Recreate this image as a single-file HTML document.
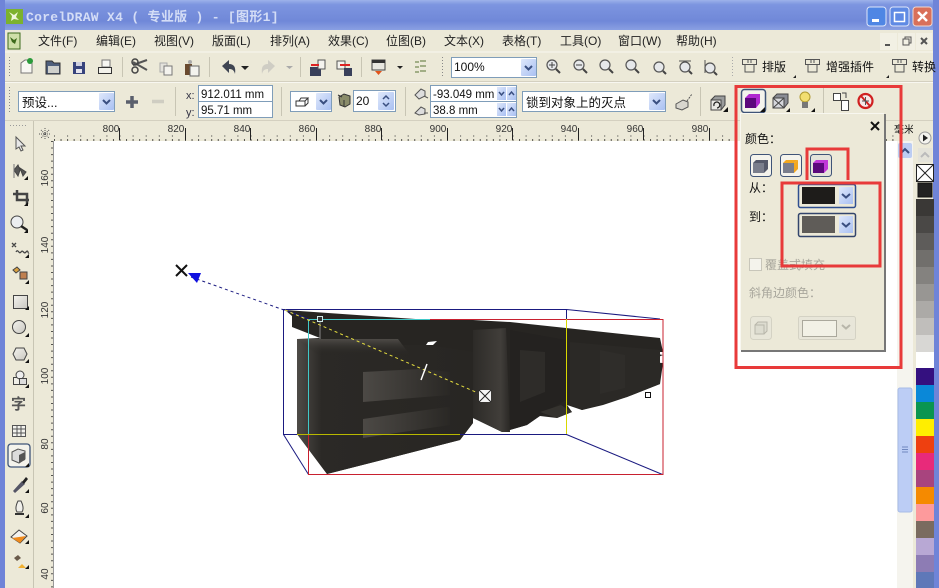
<!DOCTYPE html>
<html><head><meta charset="utf-8"><style>
html,body{margin:0;padding:0;width:939px;height:588px;overflow:hidden;background:#ece9d8}
svg{display:block}
text{font-family:"Liberation Sans","Noto Sans CJK SC",sans-serif;font-size:12px;fill:#111}
.m{font-size:12px;fill:#222}
.r{font-size:10px;fill:#333;text-anchor:middle}
.g{fill:#a8a69c}
</style></head><body>
<svg width="939" height="588" viewBox="0 0 939 588" xmlns="http://www.w3.org/2000/svg">
<defs>
<linearGradient id="tb" x1="0" y1="0" x2="0" y2="1"><stop offset="0" stop-color="#9db2ea"/><stop offset=".15" stop-color="#7d95e0"/><stop offset=".7" stop-color="#7088d8"/><stop offset="1" stop-color="#8aa0e2"/></linearGradient>
<linearGradient id="btn" x1="0" y1="0" x2="1" y2="1"><stop offset="0" stop-color="#dfe8fb"/><stop offset="1" stop-color="#a9c0f2"/></linearGradient>
<linearGradient id="face" x1="0" y1="0" x2="1" y2="0"><stop offset="0" stop-color="#4e4b47"/><stop offset=".14" stop-color="#2b2926"/><stop offset="1" stop-color="#282623"/></linearGradient>
<linearGradient id="facetop" x1="0" y1="0" x2="0" y2="1"><stop offset="0" stop-color="#4e4b47"/><stop offset="1" stop-color="#282623" stop-opacity="0"/></linearGradient>
<linearGradient id="inner" x1="0" y1="0" x2="1" y2="0"><stop offset="0" stop-color="#4c4945"/><stop offset="1" stop-color="#2a2825"/></linearGradient>
<linearGradient id="mid" x1="0" y1="0" x2="1" y2="0"><stop offset="0" stop-color="#2d2b28"/><stop offset=".75" stop-color="#413e3a"/><stop offset="1" stop-color="#2a2825"/></linearGradient>
<linearGradient id="cube" x1="0" y1="0" x2="1" y2="1"><stop offset="0" stop-color="#f4f3ee"/><stop offset="1" stop-color="#c9c7c0"/></linearGradient>
</defs>

<!-- window frame -->
<rect width="939" height="588" fill="#ece9d8"/>
<rect x="0" width="939" height="30" fill="url(#tb)"/>
<rect x="0" y="0" width="5" height="588" fill="#6f84d8"/>
<rect x="933" y="0" width="6" height="588" fill="#6f84d8"/>
<!-- title -->
<rect x="6" y="9" width="17" height="15" fill="#7cb22e"/>
<path d="M9 12l5 3 4-3-2 5 3 3-5-1-3 2 1-5z" fill="#eef6da"/>
<text x="26" y="21" style="font-family:'Liberation Mono','Noto Sans CJK SC',monospace;font-size:13px;font-weight:bold;fill:#d4ddf6;letter-spacing:.3px" xml:space="preserve">CorelDRAW X4 ( 专业版 ) - [图形1]</text>
<!-- window buttons -->
<rect x="867" y="7" width="19" height="19" rx="3" fill="#4f86e4" stroke="#dfe6fa"/><rect x="872" y="19" width="7" height="3" fill="#fff"/>
<rect x="890" y="7" width="19" height="19" rx="3" fill="#5f8ae4" stroke="#dfe6fa"/><rect x="894.500" y="12.500" width="10" height="9" fill="none" stroke="#fff" stroke-width="1.500"/>
<rect x="913" y="7" width="19" height="19" rx="3" fill="#d9705a" stroke="#efd8d2"/><path d="M918 12l9 9m0-9l-9 9" stroke="#fff" stroke-width="2.500"/>

<!-- menu bar -->
<rect x="5" y="30" width="928" height="22" fill="#ece9d8"/>
<rect x="8" y="33" width="12" height="16" fill="#cfe0a8" stroke="#3d6a1c"/><path d="M10 37l4 3 3-2-2 6-3-2z" fill="#3d6a1c"/>
<text class="m" x="38" y="45" xml:space="preserve">文件(F)</text>
<text class="m" x="96" y="45">编辑(E)</text>
<text class="m" x="154" y="45">视图(V)</text>
<text class="m" x="212" y="45">版面(L)</text>
<text class="m" x="270" y="45">排列(A)</text>
<text class="m" x="328" y="45">效果(C)</text>
<text class="m" x="386" y="45">位图(B)</text>
<text class="m" x="444" y="45">文本(X)</text>
<text class="m" x="502" y="45">表格(T)</text>
<text class="m" x="560" y="45">工具(O)</text>
<text class="m" x="618" y="45">窗口(W)</text>
<text class="m" x="676" y="45">帮助(H)</text>
<rect x="880" y="33" width="17" height="17" fill="#f2f0e4"/><rect x="898" y="33" width="17" height="17" fill="#f2f0e4"/><rect x="916" y="33" width="16" height="17" fill="#f2f0e4"/>
<rect x="885" y="44" width="5" height="2" fill="#555"/>
<rect x="903" y="39" width="6" height="6" fill="none" stroke="#555"/><path d="M905 39v-2h6v6h-2" fill="none" stroke="#555"/>
<path d="M921 38l6 6m0-6l-6 6" stroke="#555" stroke-width="2"/>

<!-- toolbars borders -->
<line x1="5" y1="52" x2="933" y2="52" stroke="#f8f7f0"/>
<line x1="5" y1="81.500" x2="933" y2="81.500" stroke="#d4d0c0"/>
<line x1="5" y1="82.500" x2="933" y2="82.500" stroke="#f8f7f0"/>
<line x1="5" y1="120.500" x2="933" y2="120.500" stroke="#d4d0c0"/>
<line x1="9.500" y1="57" x2="9.500" y2="77" stroke="#888" stroke-dasharray="1 2"/>
<line x1="9.500" y1="87" x2="9.500" y2="114" stroke="#888" stroke-dasharray="1 2"/>
<line x1="442.500" y1="57" x2="442.500" y2="77" stroke="#888" stroke-dasharray="1 2"/>
<line x1="732.500" y1="57" x2="732.500" y2="77" stroke="#aaa" stroke-dasharray="1 2"/>

<!-- toolbar 1 icons -->
<path d="M21 73V63l4-3h7v13z" fill="#f8f7f2" stroke="#777"/><circle cx="30" cy="61" r="3" fill="#2a9a3a"/>
<path d="M46 74V61h6l2 2h6v11z" fill="#4f5f7c" stroke="#333"/><rect x="48" y="66" width="11" height="7" fill="#cfd0cc"/>
<rect x="73" y="62" width="12" height="12" fill="#37437c"/><rect x="76" y="62" width="6" height="4" fill="#cfd0e0"/><rect x="76" y="69" width="6" height="4" fill="#e4e4ee"/>
<rect x="102" y="60" width="8" height="7" fill="#f6f6f2" stroke="#777"/><rect x="98.500" y="67.500" width="13" height="6" fill="#f2f1ea" stroke="#333"/>
<line x1="122.500" y1="57" x2="122.500" y2="77" stroke="#c8c5b4"/>
<path d="M133 65l14-5M133 62l14 8" stroke="#555" stroke-width="2" fill="none"/><circle cx="135" cy="62" r="3" fill="none" stroke="#444" stroke-width="1.500"/><circle cx="135" cy="70" r="3" fill="none" stroke="#444" stroke-width="1.500"/>
<rect x="160" y="63" width="7" height="9" fill="#e4e3dc" stroke="#aaa"/><rect x="164" y="66" width="8" height="9" fill="#f4f3ee" stroke="#777"/>
<rect x="185" y="64" width="7" height="11" fill="#6a4a2e"/><rect x="190" y="66" width="9" height="10" fill="#f3f3ee" stroke="#666"/><circle cx="190" cy="62" r="2" fill="#aaa"/>
<line x1="209.500" y1="57" x2="209.500" y2="77" stroke="#c8c5b4"/>
<path d="M222 66l7-6v4c5 0 7 3 6 10-1-4-3-5-6-5v4z" fill="#3f4552"/>
<path d="M245 66l4 0-4 4-4-4z" fill="#222"/>
<path d="M275 66l-7-6v4c-5 0-7 3-6 10 1-4 3-5 6-5v4z" fill="#cfcdc4"/>
<path d="M286 66h7l-3.500 3z" fill="#aaa"/>
<line x1="300.500" y1="57" x2="300.500" y2="77" stroke="#c8c5b4"/>
<rect x="310" y="67" width="11" height="9" fill="#39405a"/><rect x="318" y="60" width="7" height="9" fill="#f4f3ee" stroke="#555"/><path d="M311 65h8" stroke="#d22" stroke-width="2"/>
<rect x="337" y="61" width="8" height="8" fill="#f4f3ee" stroke="#555"/><rect x="344" y="68" width="8" height="8" fill="#39405a"/><path d="M340 65h10" stroke="#d22" stroke-width="2"/>
<line x1="361.500" y1="57" x2="361.500" y2="77" stroke="#c8c5b4"/>
<rect x="372" y="60" width="13" height="10" fill="#e8e7e0" stroke="#444"/><rect x="372" y="60" width="13" height="3" fill="#333"/><path d="M375 71h7l-3.500 4z" fill="#e2541b"/>
<path d="M397 66h6l-3 3z" fill="#222"/>
<path d="M415 62h4M415 67h4M415 72h4M420 61h6M420 66h6M420 71h6" stroke="#8a9a6a" stroke-width="1.500"/>
<!-- zoom combo -->
<rect x="451.500" y="57.500" width="85" height="20" fill="#fff" stroke="#7f9db9"/>
<text x="454" y="71" style="font-size:12px">100%</text>
<rect x="521" y="59" width="15" height="17" rx="1" fill="url(#btn)"/><path d="M525 66l3.500 3.500 3.500-3.500" fill="none" stroke="#3a4f80" stroke-width="2"/>
<!-- zoom icons -->
<g fill="#e6e8ea" stroke="#555" stroke-width="1.200">
<circle cx="552" cy="65" r="5"/><circle cx="579" cy="65" r="5"/><circle cx="605" cy="65" r="5"/><circle cx="631" cy="65" r="5"/><circle cx="659" cy="67" r="5"/><circle cx="685" cy="67" r="5"/><circle cx="710" cy="68" r="5"/>
</g>
<g stroke="#444" stroke-width="2"><path d="M556 69l4 4M583 69l4 4M609 69l4 4M635 69l4 4M663 71l3 3M689 71l3 3M714 72l3 3"/></g>
<path d="M549 65h6M552 62v6M576 65h6" stroke="#444"/>
<path d="M679 61h12M705 60v13" stroke="#555"/>
<!-- plug-in buttons -->
<g fill="none" stroke="#555"><rect x="742.500" y="59.500" width="14" height="5"/><path d="M745 65v7h9v-7M748 60v3M751 60v3"/><rect x="805.500" y="59.500" width="14" height="5"/><path d="M808 65v7h9v-7M811 60v3M814 60v3"/><rect x="892.500" y="59.500" width="14" height="5"/><path d="M895 65v7h9v-7M898 60v3M901 60v3"/></g>
<text x="762" y="71" style="font-size:12px">排版</text>
<text x="826" y="71" style="font-size:12px">增强插件</text>
<text x="912" y="71" style="font-size:12px">转换</text>
<path d="M796 78h-3l3-3zM889 78h-3l3-3z" fill="#222"/>

<!-- toolbar 2 -->
<rect x="18.500" y="91.500" width="96" height="20" fill="#fff" stroke="#7f9db9"/>
<text x="22" y="107" style="font-size:12.500px">预设...</text>
<rect x="99" y="93" width="15" height="17" rx="1" fill="url(#btn)"/><path d="M103 100l3.500 3.500 3.500-3.500" fill="none" stroke="#3a4f80" stroke-width="2"/>
<path d="M126 102h12M132 96v12" stroke="#5a5f6c" stroke-width="3.500"/>
<path d="M152 101.500h12" stroke="#cfcdc2" stroke-width="3.500"/>
<line x1="175.500" y1="87" x2="175.500" y2="116" stroke="#c8c5b4"/>
<text x="186" y="99" style="font-size:11px;fill:#334">x:</text>
<text x="186" y="116" style="font-size:11px;fill:#334">y:</text>
<rect x="198.500" y="85.500" width="74" height="32" fill="#fff" stroke="#7f9db9"/><line x1="198" y1="101.500" x2="272" y2="101.500" stroke="#7f9db9"/>
<text x="201" y="98" style="font-size:11.500px">912.011 mm</text>
<text x="201" y="114" style="font-size:11.500px">95.71 mm</text>
<line x1="281.500" y1="87" x2="281.500" y2="116" stroke="#c8c5b4"/>
<rect x="290.500" y="91.500" width="41" height="20" fill="#fff" stroke="#7f9db9"/>
<path d="M296 106v-5h9v5zM305 101l3-3h-7l-2 3M305 106l3-3v-5" fill="none" stroke="#333"/>
<rect x="316" y="93" width="15" height="17" rx="1" fill="url(#btn)"/><path d="M320 100l3.500 3.500 3.500-3.500" fill="none" stroke="#3a4f80" stroke-width="2"/>
<path d="M339 97l5-3 6 2v8l-5 3-5-2z" fill="#8a8c6a" stroke="#333"/><path d="M338 95l4 2M344 100v7" stroke="#333"/>
<rect x="353.500" y="90.500" width="42" height="21" fill="#fff" stroke="#7f9db9"/>
<text x="356" y="105" style="font-size:12px">20</text>
<rect x="378" y="92" width="16" height="18" rx="1" fill="url(#btn)"/><path d="M383 99l3-3 3 3M383 103l3 3 3-3" fill="none" stroke="#3a4f80" stroke-width="1.500"/>
<line x1="405.500" y1="87" x2="405.500" y2="116" stroke="#c8c5b4"/>
<path d="M415 95l6-6 4 2v5l-6 3z" fill="#ddd" stroke="#555"/><path d="M415 113l6-6 4 2v5l-6 1z" fill="#ddd" stroke="#555"/><path d="M424 96l4 2M424 113l4 0" stroke="#555"/>
<rect x="430.500" y="85.500" width="86" height="32" fill="#fff" stroke="#7f9db9"/><line x1="430" y1="101.500" x2="516" y2="101.500" stroke="#7f9db9"/>
<text x="433" y="98" style="font-size:11.500px">-93.049 mm</text>
<text x="433" y="114" style="font-size:11.500px">38.8 mm</text>
<g fill="url(#btn)"><rect x="497" y="87" width="9" height="13"/><rect x="507" y="87" width="9" height="13"/><rect x="497" y="103" width="9" height="13"/><rect x="507" y="103" width="9" height="13"/></g>
<path d="M499 92l2.500 3 2.500-3M499 108l2.500 3 2.500-3" fill="none" stroke="#3a4f80" stroke-width="1.500"/>
<path d="M509 95l2.500-3 2.500 3M509 111l2.500-3 2.500 3" fill="none" stroke="#3a4f80" stroke-width="1.500"/>
<rect x="522.500" y="91.500" width="143" height="20" fill="#fff" stroke="#7f9db9"/>
<text x="526" y="107" style="font-size:12.500px">锁到对象上的灭点</text>
<rect x="649" y="93" width="16" height="17" rx="1" fill="url(#btn)"/><path d="M653 100l3.500 3.500 3.500-3.500" fill="none" stroke="#3a4f80" stroke-width="2"/>
<path d="M676 104l7-4 5 2v5l-6 3-6-2z" fill="#d8d6ce" stroke="#555"/><path d="M687 101l5-7" stroke="#555" stroke-dasharray="2 1"/>
<line x1="700.500" y1="87" x2="700.500" y2="116" stroke="#c8c5b4"/>
<path d="M711 100l4-4h10v9l-4 5h-10z" fill="#9a9c9c" stroke="#444"/><rect x="711" y="100" width="10" height="10" fill="#e8e8e4" stroke="#444"/><path d="M714 106a3 3 0 1 1 3 2" fill="none" stroke="#222" stroke-width="1.300"/><path d="M728 112h-5l5-5z" fill="#111"/>
<!-- extrude buttons -->
<rect x="741.500" y="89.500" width="24" height="23" rx="3" fill="#f4f3ec" stroke="#3f5478" stroke-width="1.500"/>
<path d="M745 98l4-4h11v9l-4 5h-11z" fill="#b028d0"/><rect x="745" y="98" width="11" height="10" fill="#5c087c"/>
<path d="M765 112h-5l5-5z" fill="#111"/>
<path d="M773 98l4-4h11v9l-4 5h-11z" fill="#8a8c94" stroke="#444"/><rect x="773" y="98" width="11" height="10" fill="#d6d7dc" stroke="#444"/><path d="M773 98l11 10m0-10l-11 10" stroke="#444"/>
<path d="M790 112h-4l4-4z" fill="#111"/>
<circle cx="805" cy="97" r="5" fill="#f2de70" stroke="#b09a30"/><rect x="802" y="102" width="6" height="6" fill="#777"/><path d="M815 112h-4l4-4z" fill="#111"/>
<line x1="823.500" y1="87" x2="823.500" y2="113" stroke="#c8c5b4"/>
<rect x="833.500" y="93.500" width="7" height="7" fill="#fff" stroke="#444"/><rect x="841.500" y="100.500" width="7" height="10" fill="#fff" stroke="#444"/><path d="M842 93h4v5" fill="none" stroke="#444"/>
<circle cx="865.500" cy="101" r="7" fill="#f5e8e8" stroke="#d02020" stroke-width="2.200"/><path d="M861 96l9 10" stroke="#d02020" stroke-width="2"/><path d="M862 101h7M865.500 97v8" stroke="#555"/>

<!-- horizontal ruler -->
<rect x="5" y="121" width="928" height="20" fill="#ece9d8"/>
<rect x="33" y="121" width="1" height="467" fill="#c8c5b4"/>
<line x1="54" y1="140" x2="895" y2="140" stroke="#222" stroke-width="1.500" stroke-dasharray="1 5.550"/>
<line x1="54" y1="136" x2="895" y2="136" stroke="#333" stroke-width="1" stroke-dasharray="1 12.100" stroke-dashoffset="0"/>
<g class="ticks" stroke="#222"><path d="M119.500 128v12M185.500 128v12M250.500 128v12M316.500 128v12M381.500 128v12M447.500 128v12M512.500 128v12M578.500 128v12M643.500 128v12M709.500 128v12"/></g>
<text class="r" x="111" y="132">800</text><text class="r" x="176" y="132">820</text><text class="r" x="242" y="132">840</text><text class="r" x="307" y="132">860</text><text class="r" x="373" y="132">880</text><text class="r" x="438" y="132">900</text><text class="r" x="504" y="132">920</text><text class="r" x="569" y="132">940</text><text class="r" x="635" y="132">960</text><text class="r" x="700" y="132">980</text>
<text x="894" y="133" style="font-size:10px">毫米</text>
<path d="M41 130l8 8m0-8l-8 8M45 128v12M39 134h12" stroke="#555" stroke-dasharray="1 1" fill="none"/>

<!-- canvas -->
<rect x="54" y="141" width="843" height="447" fill="#fff"/>

<!-- vertical ruler -->
<rect x="34" y="141" width="20" height="447" fill="#ece9d8"/>
<line x1="52" y1="141" x2="52" y2="588" stroke="#222" stroke-width="1.500" stroke-dasharray="1 5.550"/>
<line x1="53.500" y1="141" x2="53.500" y2="588" stroke="#999"/>
<g class="r"><text class="r" transform="translate(48,178) rotate(-90)">160</text><text class="r" transform="translate(48,245) rotate(-90)">140</text><text class="r" transform="translate(48,310) rotate(-90)">120</text><text class="r" transform="translate(48,376) rotate(-90)">100</text><text class="r" transform="translate(48,444) rotate(-90)">80</text><text class="r" transform="translate(48,508) rotate(-90)">60</text><text class="r" transform="translate(48,574) rotate(-90)">40</text></g>

<!-- toolbox -->
<line x1="10" y1="125.500" x2="28" y2="125.500" stroke="#999" stroke-dasharray="1 2"/>
<path d="M16 137v12l3-2 2 4 2-1-2-4h4z" fill="#e8e8e8" stroke="#555"/>
<path d="M14 170l4-5 2 5-2 6zM20 168l6 4-3 4z" fill="#555" stroke="#444"/><path d="M14 164v14" stroke="#777"/><path d="M28 180h-4l4-4z" fill="#111"/>
<path d="M13 194h14v10M17 190v10h12" stroke="#444" stroke-width="2.500" fill="none"/><path d="M28 206h-4l4-4z" fill="#111"/>
<circle cx="17" cy="222" r="6" fill="#eceef0" stroke="#444"/><path d="M21 226l6 4" stroke="#222" stroke-width="2.500"/><path d="M28 233h-4l4-4z" fill="#111"/>
<path d="M12 243l4 4m0-4l-4 4M16 252c2-4 3 3 5 0s3 3 5 0 2 2 3 1" fill="none" stroke="#444" stroke-width="1.300"/><path d="M29 258h-4l4-4z" fill="#111"/>
<rect x="20" y="272" width="7" height="7" fill="#c08050" stroke="#444"/><path d="M13 270l4-3 3 3-4 3z" fill="#d8a040" stroke="#444"/><path d="M29 284h-4l4-4z" fill="#111"/>
<rect x="13.500" y="295.500" width="14" height="13" fill="url(#cube)" stroke="#444"/><path d="M29 310h-4l4-4z" fill="#111"/>
<circle cx="19" cy="327" r="6.500" fill="url(#cube)" stroke="#444"/><path d="M29 337h-4l4-4z" fill="#111"/>
<path d="M13 354l3-6h8l3 6-3 6h-8z" fill="url(#cube)" stroke="#444"/><path d="M29 363h-4l4-4z" fill="#111"/>
<rect x="13.500" y="377.500" width="8" height="7" fill="#f0efe8" stroke="#444"/><circle cx="20" cy="375" r="4" fill="#eee" stroke="#444"/><rect x="19.500" y="378.500" width="7" height="6" fill="#ddd" stroke="#444"/><path d="M29 388h-4l4-4z" fill="#111"/>
<text x="11" y="409" style="font-size:15px;font-weight:bold;fill:#555">字</text>
<rect x="12.500" y="425.500" width="13" height="11" fill="#f3f3ee" stroke="#555"/><path d="M12 429h14M12 433h14M17 425v11M21 425v11" stroke="#555"/>
<rect x="8" y="444" width="22" height="23" rx="3" fill="#f4f3ec" stroke="#3f5478" stroke-width="1.300"/>
<path d="M12 452l6-3 7 2v8l-6 4-7-3z" fill="#dcdcdc" stroke="#555"/><path d="M19 455l6-3v8l-6 3z" fill="#555"/>
<path d="M29 467h-4l4-4z" fill="#111"/>
<path d="M13 491l9-10 3 3-10 9z" fill="#556"/><path d="M22 482l4-5 2 2-4 5z" fill="#222"/><path d="M29 493h-4l4-4z" fill="#111"/>
<path d="M18 501c-2 4-3 8-1 11h5c2-3 1-7-1-11z" fill="#f0efea" stroke="#444"/><rect x="15" y="513" width="9" height="2" fill="#333"/><path d="M29 518h-4l4-4z" fill="#111"/>
<path d="M11 537l8-7 8 6-7 7z" fill="#f3f2ee" stroke="#444"/><path d="M12 538l14-2-6 7z" fill="#ef8a1c"/><path d="M29 544h-4l4-4z" fill="#111"/>
<path d="M14 558l4-3 3 3-4 3z" fill="#6a5a4a"/><path d="M18 568l4-4 4 4z" fill="#f0b030"/><path d="M29 569h-4l4-4z" fill="#111"/>

<!-- drawing: extruded shape -->
<path d="M285 310L430 320L473 320L510 322L660 338L663 352L647 352L663 355L647 362L663 363L660 384L627 397L603 405L582 410L567 405L572 412L557 418L540 416L527 425L502 432L473 418L473 423L460 440L327 474L297 434L297 339L320 338L292 327L292 316Z" fill="#272522"/>
<path d="M297 339L398 339L398 345L428 345L473 352L473 423L460 440L327 474L297 434Z" fill="url(#face)"/>
<path d="M297 339L398 339L410 355L318 355Z" fill="url(#facetop)"/>
<path d="M363 372L420 369L450 372L450 395L363 402Z" fill="url(#inner)"/>
<path d="M363 419L447 407L450 408L450 425L363 438Z" fill="url(#inner)"/>
<path d="M428 342L437 341L433 345L426 345Z" fill="#fff"/>
<path d="M473 330L506 328L510 432L502 432L473 418Z" fill="url(#mid)"/>
<path d="M510 330L566 340L566 400L545 412L527 425L510 430Z" fill="#242220"/>
<path d="M520 350L545 352L545 392L520 402Z" fill="#2e2c29"/>
<path d="M570 342L660 350L660 384L627 397L582 410L570 405Z" fill="#2b2926"/>
<path d="M600 350L625 355L625 388L600 394Z" fill="#2f2d2a"/>
<path d="M561 405L572 412L557 418L540 412Z" fill="#35332f"/>

<!-- wire box -->
<g fill="none" stroke-width="1">
<path d="M283.500 309.500H566.500V434.500H283.500Z" stroke="#1a1a80"/>
<path d="M283.500 434.500L308.500 474.500M566.500 434.500L662.500 474.500M566.500 309.500L660 319M283.500 309.500L308.500 319" stroke="#1a1a80"/>
<path d="M308.500 319.500H663V474.500H308.500Z" stroke="#c8202f"/>
<path d="M308.500 319.500V434M308.500 319.500H430" stroke="#40c8c8"/>
<path d="M297 434.500H460" stroke="#b8b800"/>
<path d="M566.500 319V434" stroke="#d8d800"/>
<path d="M320 322V339" stroke="#888"/>
<path d="M285 310L478 393" stroke="#e8e040" stroke-dasharray="3 3"/>
<path d="M191 277L284 310" stroke="#1a1a80" stroke-dasharray="3 3"/>
</g>
<rect x="317.500" y="316.500" width="5" height="5" fill="#333" stroke="#cfe8e8"/>
<rect x="645.500" y="392.500" width="5" height="5" fill="#fff" stroke="#111"/>
<path d="M421 380L427 364" stroke="#fff" stroke-width="1.500"/>
<rect x="479" y="390" width="12" height="12" fill="#f4f4f4"/><path d="M479 390l12 12m0-12l-12 12" stroke="#222"/>
<path d="M176 265l11 11m0-11l-11 11" stroke="#111" stroke-width="2"/>
<path d="M188 273L201 273L197 283Z" fill="#1010e0"/>

<!-- scrollbar + palette -->
<rect x="897" y="141" width="16" height="447" fill="#f5f4ee"/>
<rect x="898" y="143" width="14" height="15" rx="2" fill="#bccdf3"/><path d="M901 153l4-4 4 4" fill="none" stroke="#3a4f80" stroke-width="2"/>
<rect x="898" y="388" width="14" height="124" rx="2" fill="#bccdf5" stroke="#a7bbe6"/><path d="M902 447h6M902 449.500h6M902 452h6" stroke="#7088c0"/>
<rect x="913" y="121" width="20" height="467" fill="#ece9d8"/>
<circle cx="925" cy="138" r="6" fill="#f4f3ee" stroke="#999"/><path d="M923 134.500l5 3.500-5 3.500z" fill="#222"/>
<rect x="918" y="148" width="14" height="14" fill="#e4e3da"/><path d="M921 157l4-4 4 4" fill="none" stroke="#bbb" stroke-width="2"/>
<rect x="916.500" y="164.500" width="17" height="17" fill="#fff" stroke="#222"/><path d="M917 165l16 16m0-16l-16 16" stroke="#222"/>
<rect x="918" y="183" width="14" height="14" fill="#222" stroke="#111"/>
<g stroke="#fff" stroke-width="0">
<rect x="916" y="199" width="18" height="17" fill="#3a3836"/>
<rect x="916" y="216" width="18" height="17" fill="#4a4846"/>
<rect x="916" y="233" width="18" height="17" fill="#5e5c5a"/>
<rect x="916" y="250" width="18" height="17" fill="#716f6c"/>
<rect x="916" y="267" width="18" height="17" fill="#84827f"/>
<rect x="916" y="284" width="18" height="17" fill="#989693"/>
<rect x="916" y="301" width="18" height="17" fill="#acaaa7"/>
<rect x="916" y="318" width="18" height="17" fill="#c0bebb"/>
<rect x="916" y="335" width="18" height="17" fill="#d8d7d4"/>
<rect x="916" y="352" width="18" height="16" fill="#ffffff"/>
<rect x="916" y="368" width="18" height="17" fill="#34107f"/>
<rect x="916" y="385" width="18" height="17" fill="#0a88d8"/>
<rect x="916" y="402" width="18" height="17" fill="#0a9550"/>
<rect x="916" y="419" width="18" height="17" fill="#ffee00"/>
<rect x="916" y="436" width="18" height="17" fill="#ee4010"/>
<rect x="916" y="453" width="18" height="17" fill="#e82a7a"/>
<rect x="916" y="470" width="18" height="17" fill="#a8447e"/>
<rect x="916" y="487" width="18" height="17" fill="#f58a00"/>
<rect x="916" y="504" width="18" height="17" fill="#fd9a9c"/>
<rect x="916" y="521" width="18" height="17" fill="#7a6b5f"/>
<rect x="916" y="538" width="18" height="17" fill="#b8a8d4"/>
<rect x="916" y="555" width="18" height="17" fill="#8d7cb4"/>
<rect x="916" y="572" width="18" height="16" fill="#5f78b8"/>
</g>

<!-- flyout panel -->
<rect x="741" y="114" width="145" height="238" fill="#777"/>
<rect x="740" y="113" width="144" height="237" fill="#ece9d8"/>
<rect x="740" y="113" width="144" height="1" fill="#f8f7f0"/>
<rect x="740" y="113" width="1" height="237" fill="#f8f7f0"/>
<path d="M871 122l8 8m0-8l-8 8" stroke="#111" stroke-width="2"/>
<text x="745" y="143" style="font-size:12px">颜色：</text>
<rect x="750.500" y="154.500" width="21" height="22" rx="3" fill="#f4f3ec" stroke="#3f5478"/>
<path d="M753 163l3-3h12v9l-4 4h-11z" fill="#55596a"/><rect x="753" y="163" width="11" height="10" fill="#7a7e8c"/>
<rect x="780.500" y="154.500" width="21" height="22" rx="3" fill="#f4f3ec" stroke="#3f5478"/>
<path d="M783 163l3-3h12l-4 3z" fill="#f2a820"/><path d="M794 163l4-3v9l-4 4z" fill="#f2a820"/><rect x="783" y="163" width="11" height="10" fill="#7a7e8c"/>
<rect x="810.500" y="154.500" width="21" height="22" rx="3" fill="#e4e3da" stroke="#3f5478"/>
<path d="M813 163l3-3h12v9l-4 4h-11z" fill="#c038d8"/><rect x="813" y="163" width="11" height="10" fill="#5c087c"/>
<text x="749" y="192" style="font-size:12px">从：</text>
<text x="749" y="221" style="font-size:12px">到：</text>
<rect x="798.500" y="184.500" width="57" height="23" rx="2" fill="#ece9d8" stroke="#2f4f90" stroke-width="1.500"/>
<rect x="802" y="187" width="33" height="17" fill="#1e1c1a"/>
<rect x="839" y="187" width="14" height="17" fill="url(#btn)"/><path d="M842 194l4 3.500 4-3.500" fill="none" stroke="#3a4f80" stroke-width="2"/>
<rect x="798.500" y="213.500" width="57" height="23" rx="2" fill="#ece9d8" stroke="#33456c" stroke-width="1.500"/>
<rect x="802" y="216" width="33" height="17" fill="#5f5c58"/>
<rect x="839" y="216" width="14" height="17" fill="url(#btn)"/><path d="M842 223l4 3.500 4-3.500" fill="none" stroke="#3a4f80" stroke-width="2"/>
<rect x="749.500" y="258.500" width="12" height="12" fill="#f4f3ec" stroke="#c8c6ba"/>
<text class="g" x="765" y="269" style="font-size:12px;fill:#a8a69c">覆盖式填充</text>
<text class="g" x="749" y="297" style="font-size:12px;fill:#a8a69c">斜角边颜色：</text>
<rect x="750.500" y="316.500" width="21" height="23" rx="3" fill="#e8e6d9" stroke="#d4d2c4"/>
<path d="M755 325l3-3h9v9l-3 3h-9z" fill="#dddcd0" stroke="#b8b6aa"/><rect x="755" y="325" width="9" height="9" fill="none" stroke="#b8b6aa"/>
<rect x="798.500" y="316.500" width="57" height="23" rx="2" fill="#e8e6d9" stroke="#d4d2c4"/>
<rect x="802.500" y="320.500" width="34" height="16" fill="#f2f1e6" stroke="#aaa89c"/>
<path d="M842 325l4 3.500 4-3.500" fill="none" stroke="#b8b6aa" stroke-width="2"/>

<!-- red annotation frames -->
<g fill="none" stroke="#e83a3a" stroke-width="3">
<rect x="736" y="86.500" width="165" height="281"/>
<path d="M807 180V149H848V180"/>
<rect x="782" y="183" width="98" height="83"/>
</g>
</svg>
</body></html>
